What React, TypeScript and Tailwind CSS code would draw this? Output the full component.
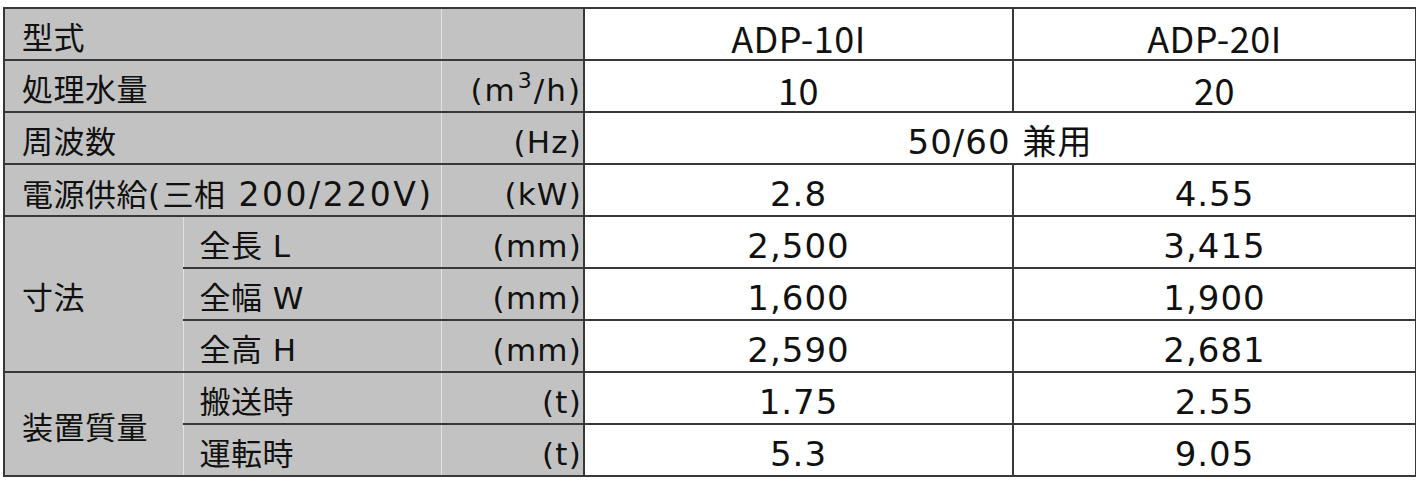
import React from "react";

const lbl = "bg-[#c2c2c2] text-left align-middle";
const dk = "border-[#383838]";

function Data({ children, tall, span }: { children: React.ReactNode; tall?: boolean; span?: number }) {
  return (
    <td
      colSpan={span}
      className={`border-2 ${dk} bg-white text-center align-middle ${
        tall
          ? "font-['Noto_Sans_CJK_JP',sans-serif] text-[36px] leading-none pt-[6px]"
          : "text-[34px] tracking-[1px] leading-none pt-[7px]"
      }`}
    >
      {children}
    </td>
  );
}

function Unit({ children }: { children?: React.ReactNode }) {
  return (
    <td
      className={`${lbl} border-y-2 border-y-[#383838] border-r-2 border-r-[#383838] border-l border-l-[#e2e2e2] text-right pr-[1px] pt-[8px] whitespace-nowrap tracking-[1.2px]`}
    >
      {children}
    </td>
  );
}

export default function App() {
  const full = `${lbl} border-y-2 border-y-[#383838] border-l-2 border-l-[#383838] border-r border-r-[#e2e2e2] pl-[17px] pt-[8px] whitespace-nowrap`;
  const group = `${lbl} border-y-2 border-y-[#383838] border-l-2 border-l-[#383838] border-r border-r-[#e2e2e2] pl-[17px] pt-[8px]`;
  const sub = `${lbl} border-y-2 border-y-[#383838] border-l border-l-[#e2e2e2] border-r border-r-[#e2e2e2] pl-[16px] pt-[8px] whitespace-nowrap`;

  return (
    <div className="w-[1416px] h-[481px] bg-white pt-[7px] pl-[3px] text-[#111] font-['DejaVu_Sans','Noto_Sans_CJK_JP',sans-serif] text-[31px] leading-none tracking-[0.5px]">
      <table className="border-collapse table-fixed w-[1412px]">
        <colgroup>
          <col className="w-[179px]" />
          <col className="w-[258px]" />
          <col className="w-[143px]" />
          <col className="w-[429px]" />
          <col className="w-[403px]" />
        </colgroup>
        <tbody>
          <tr className="h-[52px]">
            <td colSpan={2} className={full}>型式</td>
            <Unit />
            <Data tall>ADP-10I</Data>
            <Data tall>ADP-20I</Data>
          </tr>
          <tr className="h-[52px]">
            <td colSpan={2} className={full}>処理水量</td>
            <Unit>
              <span className="tracking-[2px]">
                (m<sup className="text-[22px] top-[-0.55em] pl-[1px]">3</sup>/h)
              </span>
            </Unit>
            <Data tall>10</Data>
            <Data tall>20</Data>
          </tr>
          <tr className="h-[52px]">
            <td colSpan={2} className={full}>周波数</td>
            <Unit>(Hz)</Unit>
            <Data span={2}>50/60 兼用</Data>
          </tr>
          <tr className="h-[52px]">
            <td colSpan={2} className={full}>
              電源供給<span className="tracking-[2.5px]">(</span>三相
              <span className="text-[33px] tracking-[2.5px]"> 200/220V)</span>
            </td>
            <Unit>(kW)</Unit>
            <Data>2.8</Data>
            <Data>4.55</Data>
          </tr>
          <tr className="h-[52px]">
            <td rowSpan={3} className={group}>寸法</td>
            <td className={sub}>全長 L</td>
            <Unit>(mm)</Unit>
            <Data>2,500</Data>
            <Data>3,415</Data>
          </tr>
          <tr className="h-[52px]">
            <td className={sub}>全幅 W</td>
            <Unit>(mm)</Unit>
            <Data>1,600</Data>
            <Data>1,900</Data>
          </tr>
          <tr className="h-[52px]">
            <td className={sub}>全高 H</td>
            <Unit>(mm)</Unit>
            <Data>2,590</Data>
            <Data>2,681</Data>
          </tr>
          <tr className="h-[52px]">
            <td rowSpan={2} className={group}>装置質量</td>
            <td className={sub}>搬送時</td>
            <Unit>(t)</Unit>
            <Data>1.75</Data>
            <Data>2.55</Data>
          </tr>
          <tr className="h-[52px]">
            <td className={sub}>運転時</td>
            <Unit>(t)</Unit>
            <Data>5.3</Data>
            <Data>9.05</Data>
          </tr>
        </tbody>
      </table>
    </div>
  );
}
